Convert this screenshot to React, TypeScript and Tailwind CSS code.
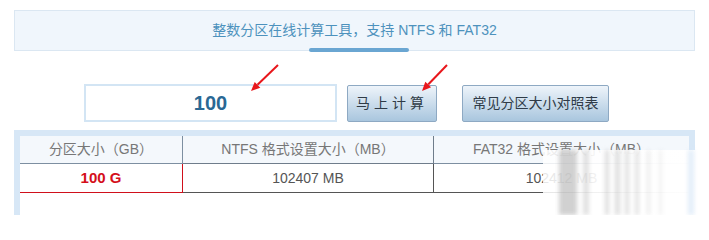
import React from "react";

const cjk = "font-['Liberation_Sans','Noto_Sans_CJK_SC',sans-serif]";

function Arrows() {
  return (
    <svg className="pointer-events-none absolute left-0 top-0" width="709" height="215">
      <line x1="278" y1="65" x2="257.5" y2="84.8" stroke="#e8161b" strokeWidth="2" />
      <polygon points="251,91 260.3,87.7 254.7,81.9" fill="#e8161b" />
      <line x1="447" y1="65" x2="428.2" y2="84.5" stroke="#e8161b" strokeWidth="2" />
      <polygon points="422,91 431.1,87.3 425.3,81.7" fill="#e8161b" />
    </svg>
  );
}

// blurred watermark over the bottom-right corner
function Watermark() {
  return (
    <div className="pointer-events-none absolute left-[543px] top-[150px] h-[65px] w-[166px] bg-gradient-to-r from-white/85 via-white/95 to-white">
      <div className="flex h-full items-stretch blur-[2px]">
        <div className="ml-[16px] w-[18px] bg-[#9a9a9a]/45" />
        <div className="ml-[6px] w-[6px] bg-[#b5b5b5]/40" />
        <div className="ml-[16px] w-[4px] bg-[#aaaaaa]/40" />
        <div className="ml-[6px] w-[5px] bg-[#aaaaaa]/40" />
        <div className="ml-[5px] w-[4px] bg-[#b0b0b0]/40" />
        <div className="ml-[6px] w-[4px] bg-[#b0b0b0]/35" />
        <div className="ml-[8px] w-[3px] bg-[#bbbbbb]/30" />
        <div className="ml-[9px] w-[3px] bg-[#c4c4c4]/25" />
        <div className="ml-[26px] w-[6px] bg-[#d7e7f6]/70" />
      </div>
    </div>
  );
}

export default function App() {
  return (
    <div className={`relative h-[215px] w-[709px] overflow-hidden bg-white ${cjk}`}>
      <div className="px-[14px] pt-[10px]">
        <div className="relative flex h-[41px] items-center justify-center border border-[#dbe7f2] bg-[#f0f6fc] text-[14px] text-[#4d92bd]">
          整数分区在线计算工具，支持 NTFS 和 FAT32
          <span className="absolute bottom-[-2px] left-[294px] h-[4px] w-[100px] rounded-full bg-[#6aa6d2]" />
        </div>
      </div>

      <div className="mt-[33px] flex items-end gap-[10px] pl-[84px]">
        <div className="flex h-[38px] w-[253px] items-center justify-center border-2 border-[#d3e5f4] bg-white">
          <span className="font-['Liberation_Sans',sans-serif] text-[20px] font-bold text-[#2a6894]">100</span>
        </div>
        <button
          type="button"
          className="h-[37px] w-[90px] rounded-[2px] border border-[#8ea9c3] bg-gradient-to-b from-[#eef4fa] to-[#a9c6de] text-[14px] tracking-[4px] text-[#2f3b47]"
        >
          马上计算
        </button>
        <button
          type="button"
          className="ml-[15px] h-[37px] w-[147px] rounded-[2px] border border-[#8ea9c3] bg-gradient-to-b from-[#eef4fa] to-[#a9c6de] text-[14px] text-[#2f3b47]"
        >
          常见分区大小对照表
        </button>
      </div>

      <div className="mx-[14px] mt-[8px] h-[85px] border-x-[6px] border-t-[6px] border-[#d7e7f6] bg-white">
        <div className="grid grid-cols-[163px_251px_1fr] text-[14px]">
          <div className="flex h-[28px] items-center justify-center border-b border-r border-[#7d8fa1] bg-[#f4f8fc] text-[#777]">
            分区大小（GB）
          </div>
          <div className="flex h-[28px] items-center justify-center border-b border-r border-[#6f7d8b] bg-[#f4f8fc] text-[#777]">
            NTFS 格式设置大小（MB）
          </div>
          <div className="flex h-[28px] items-center justify-center border-b border-[#7d8fa1] bg-[#f4f8fc] text-[#777]">
            FAT32 格式设置大小（MB）
          </div>
          <div className="flex h-[29px] items-center justify-center border-b border-r border-[#d0101b] font-['Liberation_Sans',sans-serif] text-[15px] font-bold text-[#d40f1a]">
            100 G
          </div>
          <div className="flex h-[29px] items-center justify-center border-b border-r border-[#555] text-[#555]">
            102407 MB
          </div>
          <div className="flex h-[29px] items-center justify-center border-b border-[#555] text-[#555]">
            102412 MB
          </div>
        </div>
      </div>

      <Arrows />
      <Watermark />
    </div>
  );
}
